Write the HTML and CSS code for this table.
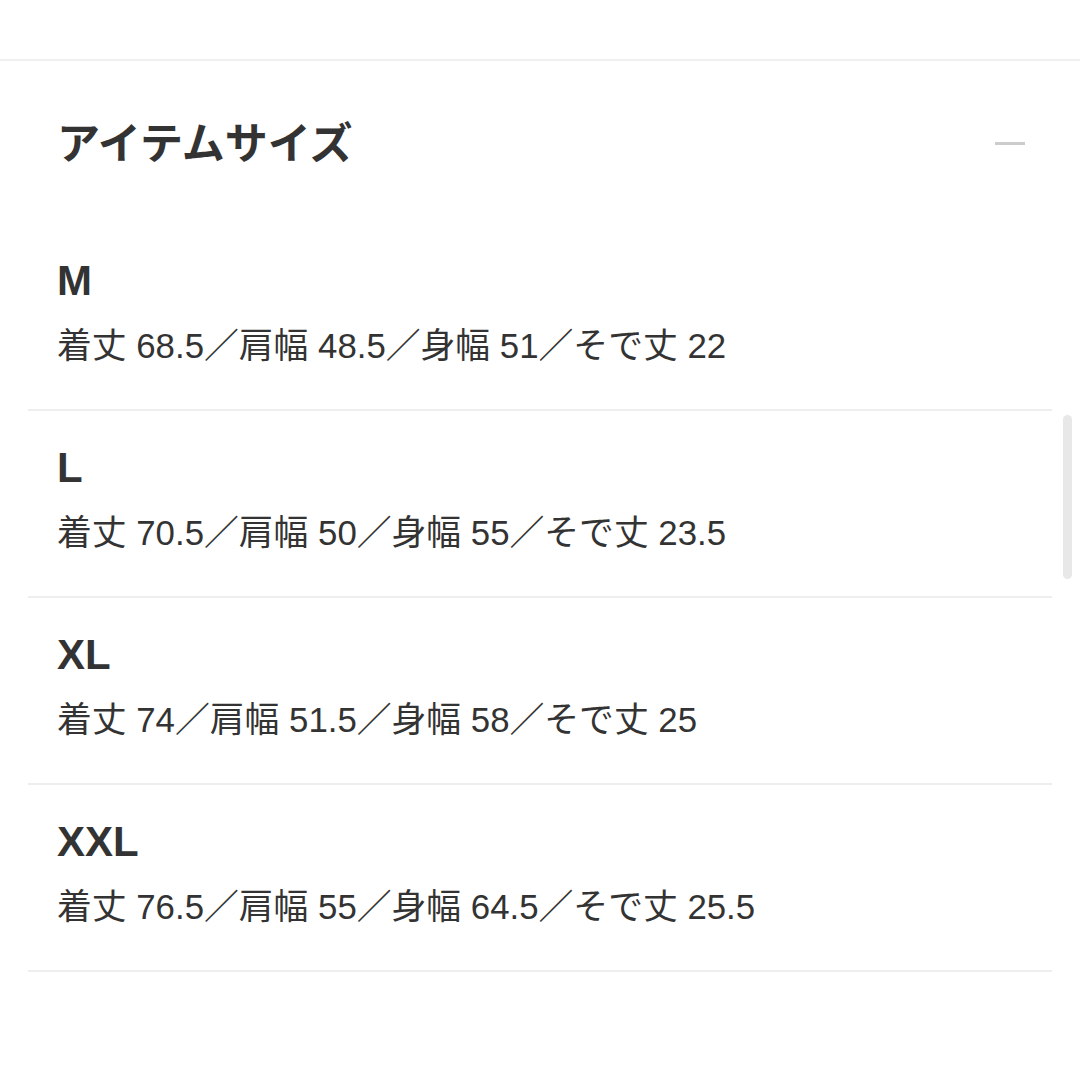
FILE: index.html
```html
<!DOCTYPE html>
<html lang="ja">
<head>
<meta charset="utf-8">
<title>アイテムサイズ</title>
<link rel="stylesheet" href="styles.css">
</head>
<body>
<div class="topbar"></div>
<section class="panel">
  <div class="panel-head">
    <h2 class="panel-title">アイテムサイズ</h2>
    <span class="collapse-icon" aria-label="閉じる"></span>
  </div>
  <ul class="size-list">
    <li class="size-item">
      <div class="size-label">M</div>
      <div class="size-spec">着丈 68.5／肩幅 48.5／身幅 51／そで丈 22</div>
    </li>
    <li class="size-item">
      <div class="size-label">L</div>
      <div class="size-spec">着丈 70.5／肩幅 50／身幅 55／そで丈 23.5</div>
    </li>
    <li class="size-item">
      <div class="size-label">XL</div>
      <div class="size-spec">着丈 74／肩幅 51.5／身幅 58／そで丈 25</div>
    </li>
    <li class="size-item">
      <div class="size-label">XXL</div>
      <div class="size-spec">着丈 76.5／肩幅 55／身幅 64.5／そで丈 25.5</div>
    </li>
  </ul>
</section>
<div class="scrollbar"></div>
</body>
</html>
```
FILE: styles.css
```css
html, body {
  margin: 0;
  padding: 0;
  background: #ffffff;
}
body {
  width: 1080px;
  height: 1080px;
  position: relative;
  overflow: hidden;
  color: #333333;
  font-family: "Liberation Sans", "Noto Sans CJK JP", sans-serif;
}
.topbar {
  height: 59px;
  border-bottom: 2px solid #efefef;
}
.panel-head {
  display: flex;
  align-items: center;
  justify-content: space-between;
  padding: 49px 55px 54px 57px;
}
.panel-title {
  margin: 0;
  font-family: "Noto Sans CJK JP", sans-serif;
  font-size: 43px;
  font-weight: 700;
  line-height: 60px;
  color: #333333;
}
.collapse-icon {
  display: block;
  width: 30px;
  height: 3px;
  margin-top: 7px;
  background: #cccccc;
}
.size-list {
  list-style: none;
  margin: 0 28px;
  padding: 0;
}
.size-item {
  padding: 27px 0 38px 29px;
  border-bottom: 2px solid #eeeeee;
}
.size-label {
  font-size: 42px;
  font-weight: 700;
  line-height: 60px;
  margin-bottom: 10px;
}
.size-spec {
  font-size: 34.8px;
  line-height: 50px;
  color: #333333;
}
.scrollbar {
  position: absolute;
  left: 1063px;
  top: 415px;
  width: 9px;
  height: 164px;
  border-radius: 5px;
  background: #e8e8e8;
}
```
